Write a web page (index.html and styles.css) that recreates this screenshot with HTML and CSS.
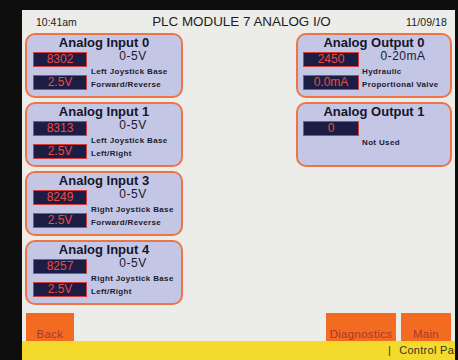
FILE: index.html
```html
<!DOCTYPE html>
<html lang="en">
<head>
    <meta charset="UTF-8">
    <meta name="viewport" content="width=device-width, initial-scale=1.0">
    <title>PLC Module 7 Analog I/O</title>
    <link rel="stylesheet" href="styles.css">
</head>
<body>
    <div class="screen">
        <div class="topbar">
            <span class="time">10:41am</span>
            <span class="title">PLC MODULE 7 ANALOG I/O</span>
            <span class="date">11/09/18</span>
        </div>

        <div class="main">
            <div class="col">
                <div class="box">
                    <h3>Analog Input 0</h3>
                    <div class="body">
                        <div class="vals">
                            <div class="val">8302</div>
                            <div class="val">2.5V</div>
                        </div>
                        <div class="info">
                            <div class="range">0-5V</div>
                            <div class="lbl">Left Joystick Base</div>
                            <div class="lbl">Forward/Reverse</div>
                        </div>
                    </div>
                </div>
                <div class="box">
                    <h3>Analog Input 1</h3>
                    <div class="body">
                        <div class="vals">
                            <div class="val">8313</div>
                            <div class="val">2.5V</div>
                        </div>
                        <div class="info">
                            <div class="range">0-5V</div>
                            <div class="lbl">Left Joystick Base</div>
                            <div class="lbl">Left/Right</div>
                        </div>
                    </div>
                </div>
                <div class="box">
                    <h3>Analog Input 3</h3>
                    <div class="body">
                        <div class="vals">
                            <div class="val">8249</div>
                            <div class="val">2.5V</div>
                        </div>
                        <div class="info">
                            <div class="range">0-5V</div>
                            <div class="lbl">Right Joystick Base</div>
                            <div class="lbl">Forward/Reverse</div>
                        </div>
                    </div>
                </div>
                <div class="box">
                    <h3>Analog Input 4</h3>
                    <div class="body">
                        <div class="vals">
                            <div class="val">8257</div>
                            <div class="val">2.5V</div>
                        </div>
                        <div class="info">
                            <div class="range">0-5V</div>
                            <div class="lbl">Right Joystick Base</div>
                            <div class="lbl">Left/Right</div>
                        </div>
                    </div>
                </div>
            </div>

            <div class="col col-out">
                <div class="box">
                    <h3>Analog Output 0</h3>
                    <div class="body body-out">
                        <div class="vals">
                            <div class="val">2450</div>
                            <div class="val">0.0mA</div>
                        </div>
                        <div class="info info-out">
                            <div class="range">0-20mA</div>
                            <div class="lbl">Hydraulic</div>
                            <div class="lbl">Proportional Valve</div>
                        </div>
                    </div>
                </div>
                <div class="box">
                    <h3>Analog Output 1</h3>
                    <div class="body body-out">
                        <div class="vals">
                            <div class="val">0</div>
                        </div>
                        <div class="info info-unused">
                            <div class="lbl">Not Used</div>
                        </div>
                    </div>
                </div>
            </div>
        </div>

        <div class="buttons">
            <button class="btn btn-back">Back</button>
            <button class="btn btn-diag">Diagnostics</button>
            <button class="btn btn-main">Main</button>
        </div>
        <div class="status"><span class="sep">|</span>Control Panel</div>
    </div>
</body>
</html>
```

FILE: styles.css
```css
html, body { margin: 0; padding: 0; }
body { background: #0e0e0e; width: 458px; height: 360px; overflow: hidden; font-family: "Liberation Sans", Arial, sans-serif; }
.screen { margin: 10px 0 0 22px; width: 433px; height: 350px; background: #ecece8; display: flex; flex-direction: column; overflow: hidden; }

.topbar { height: 23px; display: grid; grid-template-columns: 1fr auto 1fr; align-items: center; padding: 0 8px 0 14px; color: #1c1c1c; }
.time { font-size: 10.5px; }
.title { font-size: 13.4px; }
.date { font-size: 10.5px; letter-spacing: 0.1px; text-align: right; }

.main { display: flex; justify-content: space-between; padding: 0 3px; }
.col { width: 158px; display: flex; flex-direction: column; gap: 4px; }
.col-out { width: 156px; }

.box { box-sizing: border-box; height: 65px; background: #c4c6e6; border: 2px solid #ee7448; border-radius: 10px; }
.box h3 { margin: 0; font-size: 13px; font-weight: bold; line-height: 15px; text-align: center; color: #15152a; }
.body { display: grid; grid-template-columns: 54px 1fr; column-gap: 4px; padding: 0 6px; }
.body-out { grid-template-columns: 56px 1fr; padding: 0 6px 0 5px; column-gap: 3px; }
.vals { display: flex; flex-direction: column; gap: 8px; margin-top: 2px; }
.val { box-sizing: border-box; height: 15px; background: #1c1d44; border: 1px solid #d43c3a; color: #f04a3c; font-size: 12px; line-height: 13px; text-align: center; }
.info { color: #1a1a2c; }
.range { font-size: 12px; line-height: 12px; letter-spacing: 0.5px; text-align: center; }
.lbl { font-size: 8px; font-weight: bold; line-height: 13px; letter-spacing: 0.35px; margin-top: 2.5px; white-space: nowrap; }
.lbl + .lbl { margin-top: 0; }
.info-out .lbl:first-of-type { margin-top: -1px; }
.info-unused .lbl { margin-top: 17px; }

.buttons { margin-top: auto; height: 28px; display: flex; gap: 5px; padding: 0 4px; }
.btn { height: 28px; border: none; background: #f26b21; color: #a8382a; font-family: "Liberation Sans", Arial, sans-serif; font-size: 11.5px; letter-spacing: 0.3px; padding: 13px 0 0; line-height: 14px; text-align: center; }
.btn-back { width: 48px; }
.btn-diag { width: 70px; margin-left: auto; }
.btn-main { width: 50px; }

.status { height: 19px; background: #f3da2c; color: #3a3222; font-size: 11px; line-height: 19px; letter-spacing: 0.3px; padding-left: 366px; white-space: nowrap; }
.sep { margin-right: 8px; }
```
